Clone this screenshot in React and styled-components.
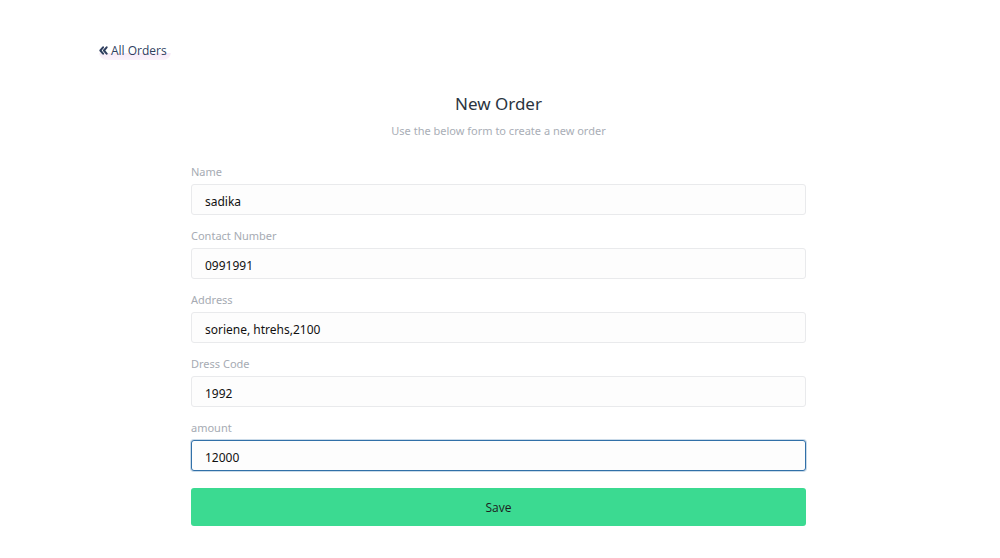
import React from 'react';
import styled, { createGlobalStyle } from 'styled-components';

const GlobalStyle = createGlobalStyle`
  body {
    margin: 0;
    background: #ffffff;
    font-family: 'Noto Sans', 'Open Sans', sans-serif;
  }
`;

const Page = styled.div`
  width: 1000px;
  height: 558px;
  padding: 38px 0 0 99px;
  box-sizing: border-box;
`;

const BackLink = styled.a`
  display: inline-flex;
  align-items: center;
  gap: 3px;
  font-family: 'Open Sans', sans-serif;
  font-size: 12px;
  color: #2f3f5f;
  text-decoration: none;
  height: 18px;
  padding-right: 4px;
  background: linear-gradient(to bottom, transparent 60%, #f6eaf6 60%, #fbf2fb 100%);
  border-radius: 0 0 8px 8px;
`;

const FormWrap = styled.div`
  width: 615px;
  margin: 31px 0 0 92px;
  display: flex;
  flex-direction: column;
`;

const Title = styled.h1`
  margin: 0;
  text-align: center;
  font-size: 17px;
  font-weight: 400;
  color: #2b3440;
  line-height: 26px;
`;

const Subtitle = styled.p`
  margin: 6px 0 26px;
  text-align: center;
  font-size: 11px;
  color: #a9aeb6;
  line-height: 16px;
`;

const Field = styled.div`
  display: flex;
  flex-direction: column;
  margin-bottom: 14px;
`;

const Label = styled.label`
  font-size: 11px;
  color: #a6abb3;
  line-height: 14px;
  margin-bottom: 5px;
`;

const Input = styled.input`
  box-sizing: border-box;
  width: 100%;
  height: 31px;
  padding: 3px 13px 0;
  border: 1px solid ${({ $focused }) => ($focused ? '#3170a8' : '#e9eaec')};
  border-radius: 3px;
  background: #fdfdfd;
  font-family: 'Noto Sans', sans-serif;
  font-size: 12px;
  color: #111;
  outline: none;
  box-shadow: ${({ $focused }) => ($focused ? '0 0 0 1px rgba(49,112,168,0.25)' : 'none')};
`;

const SaveButton = styled.button`
  height: 38px;
  margin-top: 3px;
  border: none;
  border-radius: 3px;
  background: #3bda91;
  font-family: 'Open Sans', sans-serif;
  font-size: 12px;
  color: #1d1d1d;
  cursor: pointer;
`;

const fields = [
  { label: 'Name', value: 'sadika' },
  { label: 'Contact Number', value: '0991991' },
  { label: 'Address', value: 'soriene, htrehs,2100' },
  { label: 'Dress Code', value: '1992' },
  { label: 'amount', value: '12000', focused: true },
];

const ChevronsLeft = () => (
  <svg width="9" height="9" viewBox="0 0 10 10" fill="none" stroke="#2f3f5f" strokeWidth="2.2" strokeLinecap="round" strokeLinejoin="round">
    <polyline points="4.5,1.5 1.5,5 4.5,8.5" />
    <polyline points="8.5,1.5 5.5,5 8.5,8.5" />
  </svg>
);

export default function App() {
  return (
    <>
      <GlobalStyle />
      <Page>
        <BackLink href="#">
          <ChevronsLeft />
          All Orders
        </BackLink>
        <FormWrap>
          <Title>New Order</Title>
          <Subtitle>Use the below form to create a new order</Subtitle>
          {fields.map((f) => (
            <Field key={f.label}>
              <Label>{f.label}</Label>
              <Input defaultValue={f.value} $focused={f.focused} />
            </Field>
          ))}
          <SaveButton>Save</SaveButton>
        </FormWrap>
      </Page>
    </>
  );
}
